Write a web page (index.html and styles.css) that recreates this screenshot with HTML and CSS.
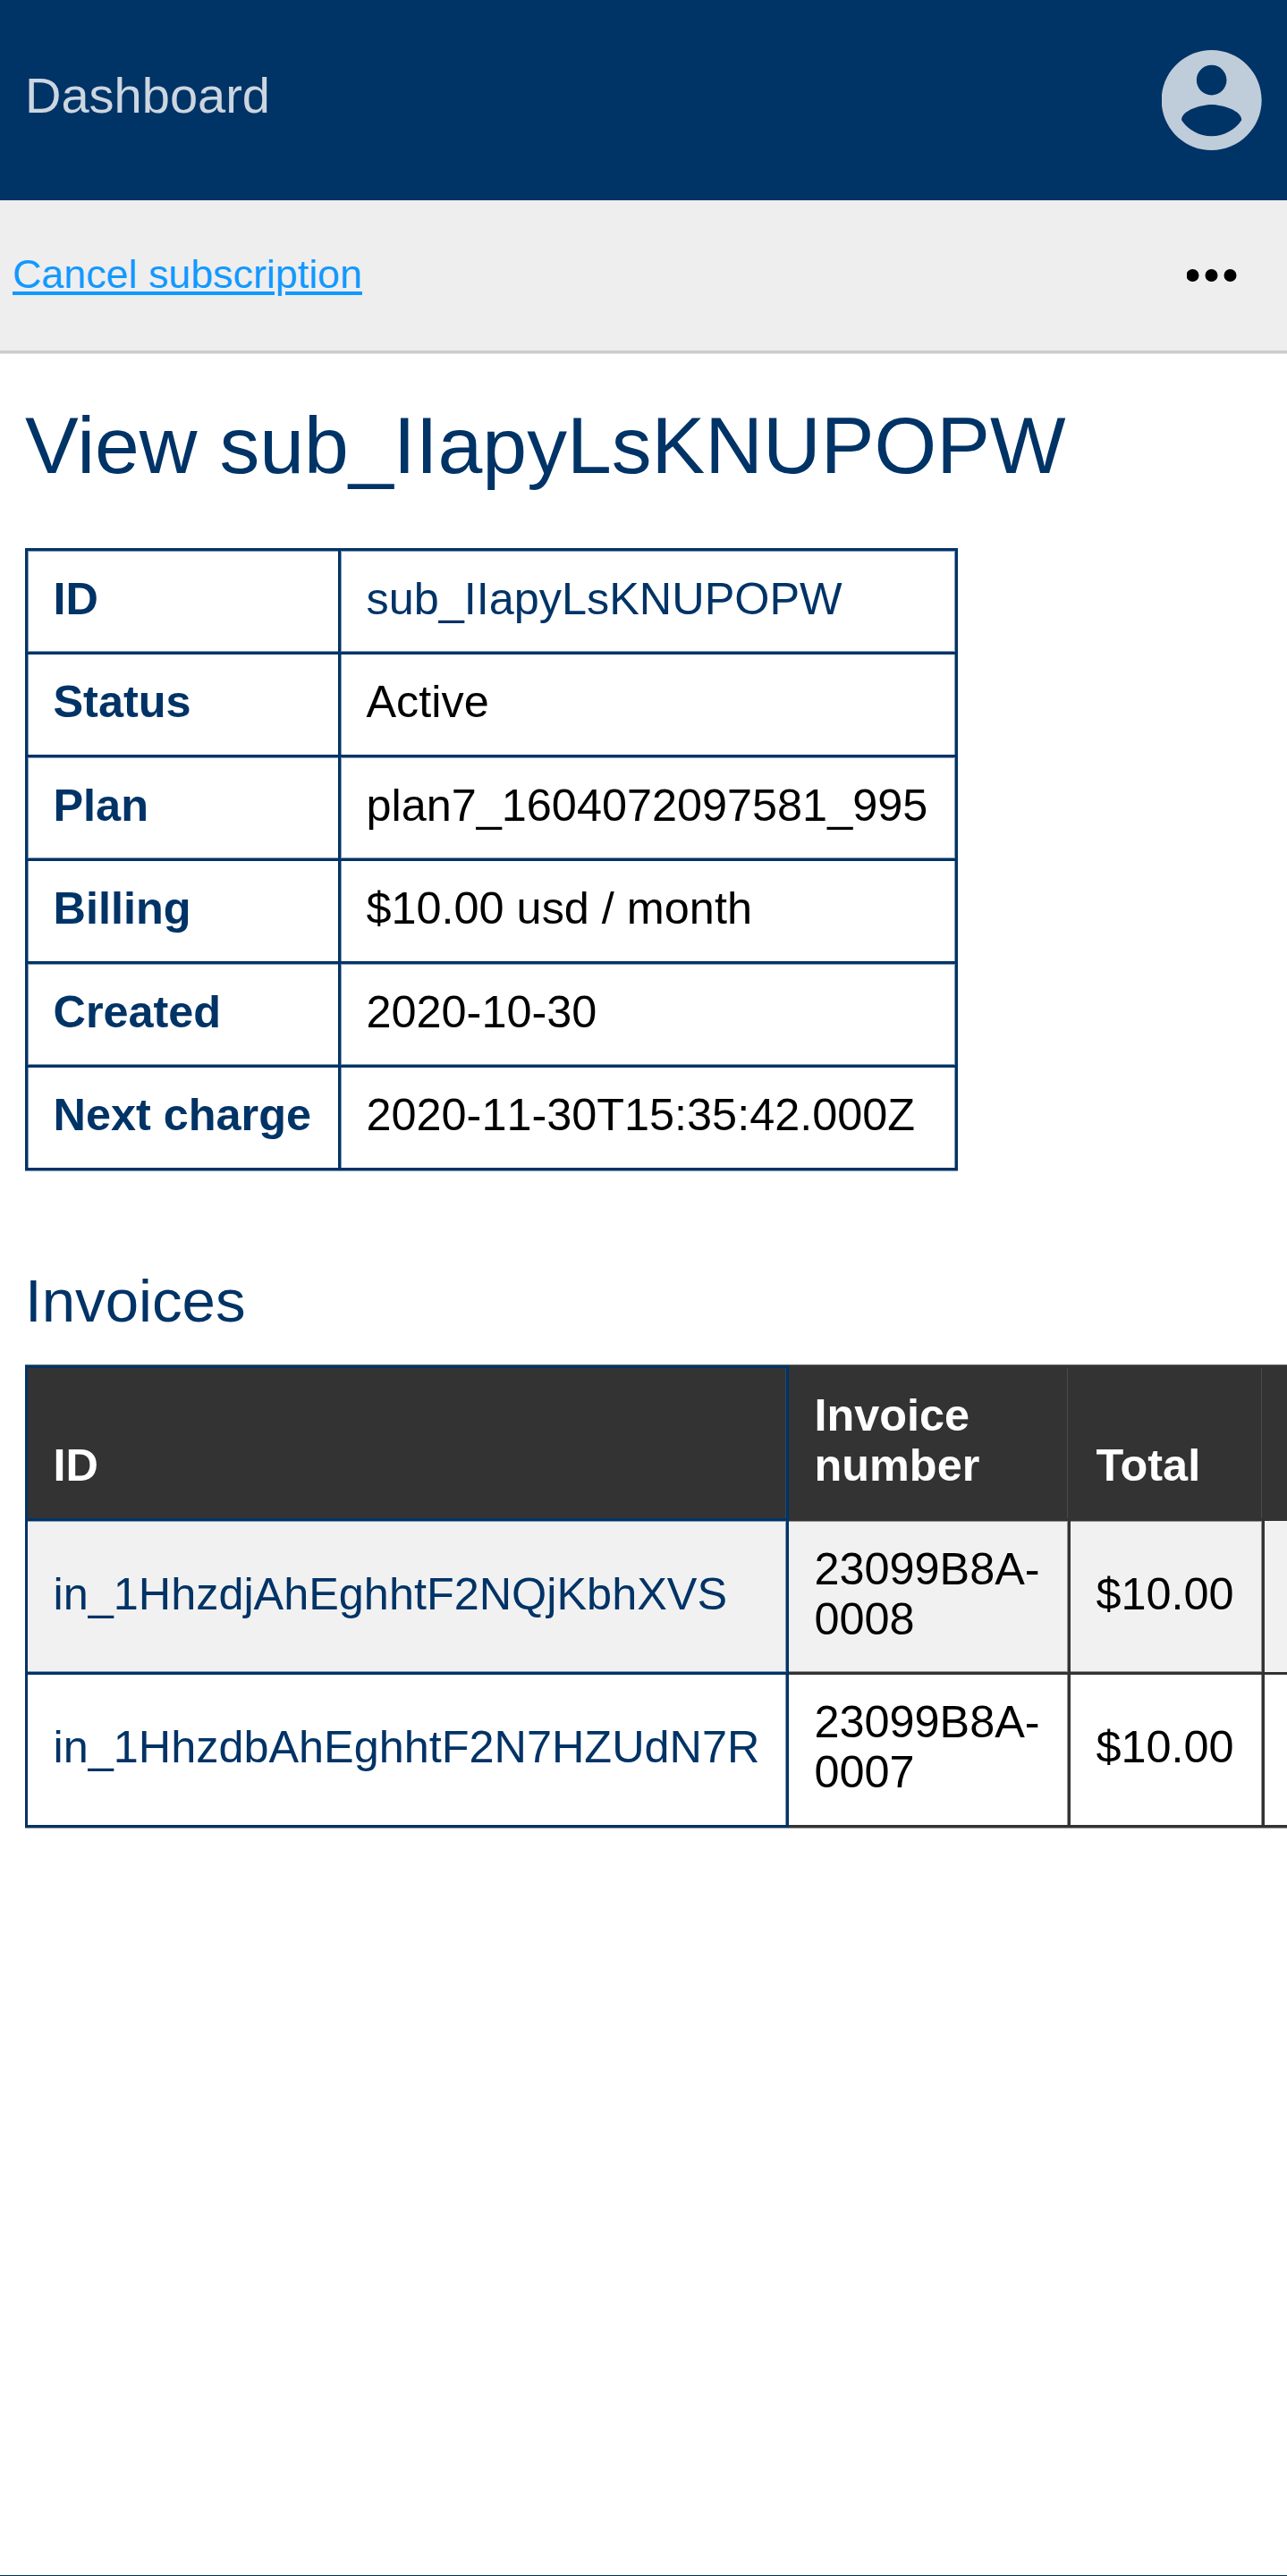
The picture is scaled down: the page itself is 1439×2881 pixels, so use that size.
FILE: index.html
```html
<!DOCTYPE html>
<html lang="en">
<head>
<meta charset="utf-8">
<title>View subscription</title>
<link rel="stylesheet" href="styles.css">
</head>
<body>
<header class="header">
  <a class="brand">Dashboard</a>
  <svg class="account" viewBox="2.06 2 20 20"><path d="M12 2C6.48 2 2 6.48 2 12s4.48 10 10 10 10-4.48 10-10S17.52 2 12 2zm0 3c1.66 0 3 1.34 3 3s-1.34 3-3 3-3-1.34-3-3 1.34-3 3-3zm0 14.2c-2.5 0-4.71-1.28-6-3.22.03-1.99 4-3.08 6-3.08 1.99 0 5.97 1.09 6 3.08-1.29 1.94-3.5 3.22-6 3.22z"/></svg>
</header>
<nav class="navbar">
  <a class="action">Cancel subscription</a>
  <svg class="more" viewBox="4.14 10 16 4"><circle cx="6" cy="12" r="2"/><circle cx="12" cy="12" r="2"/><circle cx="18" cy="12" r="2"/></svg>
</nav>
<main class="content">
  <h1>View sub_IIapyLsKNUPOPW</h1>
  <table class="details">
    <tr><th>ID</th><td><a>sub_IIapyLsKNUPOPW</a></td></tr>
    <tr><th>Status</th><td>Active</td></tr>
    <tr><th>Plan</th><td>plan7_1604072097581_995</td></tr>
    <tr><th>Billing</th><td>$10.00 usd / month</td></tr>
    <tr><th>Created</th><td>2020-10-30</td></tr>
    <tr><th>Next charge</th><td>2020-11-30T15:35:42.000Z</td></tr>
  </table>
  <h2>Invoices</h2>
  <table class="invoices">
    <colgroup><col class="col-id"><col class="col-number"><col class="col-total"><col class="col-rest"></colgroup>
    <thead>
      <tr><th>ID</th><th>Invoice number</th><th>Total</th><th></th></tr>
    </thead>
    <tbody>
      <tr><td><a>in_1HhzdjAhEghhtF2NQjKbhXVS</a></td><td>23099B8A-0008</td><td>$10.00</td><td></td></tr>
      <tr><td><a>in_1HhzdbAhEghhtF2N7HZUdN7R</a></td><td>23099B8A-0007</td><td>$10.00</td><td></td></tr>
    </tbody>
  </table>
</main>
<footer class="footer"></footer>
</body>
</html>
```
FILE: styles.css
```css
:root {
  --navy: #003366;
  --navy-soft: #8099b3;
  --dark: #333333;
  --dark-soft: #929292;
}
* { box-sizing: border-box; }
body {
  margin: 0;
  min-height: 2881px;
  display: flex;
  flex-direction: column;
  overflow: hidden;
  background: #fff;
  color: #000;
  font-family: "Liberation Sans", Arial, sans-serif;
  font-size: 50.4px;
  line-height: 56px;
}
.header {
  height: 224px;
  padding: 0 28px;
  display: flex;
  justify-content: space-between;
  align-items: center;
  background: var(--navy);
}
.brand {
  font-size: 56px;
  line-height: 64px;
  padding-bottom: 10px;
  color: #ccd6e0;
}
.account { width: 112px; height: 112px; fill: #bfccd9; }
.navbar {
  height: 171px;
  padding: 0 56px 0 14px;
  display: flex;
  justify-content: space-between;
  align-items: center;
  background: #eee;
  border-bottom: 3px solid #ccc;
  box-shadow: 0 1px #e5e5e5;
}
.action {
  padding-bottom: 4px;
  font-size: 44.8px;
  color: #1199ff;
  text-decoration: underline;
  text-decoration-thickness: 3.5px;
  text-underline-offset: 3.5px;
}
.more { width: 56px; height: 14px; }
.content { flex: 1; padding-left: 28px; }
h1, h2 { margin: 0; font-weight: 400; color: var(--navy); }
h1 { font-size: 89.6px; line-height: 102px; padding-top: 52px; height: 218px; }
h2 { font-size: 67.2px; line-height: 76px; padding-top: 108px; height: 218px; }
table { border-spacing: 0; table-layout: fixed; }
th, td { text-align: left; padding: 25px 0 0 28.5px; }
th { color: var(--navy); }
a { color: var(--navy); }

.details {
  width: 1043px;
  border: solid var(--navy);
  border-width: 3px 0 0 3px;
  box-shadow: 0 1px var(--navy-soft);
}
.details th, .details td {
  height: 115px;
  vertical-align: top;
  border: solid var(--navy);
  border-width: 0 3px 3px 0;
  box-shadow: inset 1px 0 var(--navy-soft);
}
.details th { width: 350px; }
.details td {
  font-kerning: none;
  box-shadow: inset 1px 0 var(--navy-soft), inset -1px 0 var(--navy-soft);
}
.details tr:nth-child(odd) > * { height: 116px; padding-top: 26px; }
.details tr:nth-child(odd) th {
  box-shadow: inset 1px 0 var(--navy-soft), inset 0 1px var(--navy-soft), inset 0 -1px var(--navy-soft);
}
.details tr:nth-child(odd) td {
  box-shadow: inset 1px 0 var(--navy-soft), inset -1px 0 var(--navy-soft), inset 0 1px var(--navy-soft), inset 0 -1px var(--navy-soft);
}

.invoices {
  --edge: var(--dark-soft);
  width: 1411px;
  border-left: 3px solid var(--navy);
  box-shadow: 0 1px var(--dark-soft), 0 -1px #667070;
}
.col-id { width: 851px; }
.col-number { width: 315px; }
.col-total { width: 217px; }
.invoices th, .invoices td {
  border: solid var(--dark);
  border-width: 0 3px 3px 0;
  box-shadow: inset -1px 0 var(--edge);
}
.invoices th {
  --edge: #4b4b4b;
  height: 174px;
  vertical-align: bottom;
  padding: 0 0 31px 28.5px;
  border-top-width: 3px;
  background: var(--dark);
  color: #fff;
}
.invoices td { height: 171px; vertical-align: middle; padding: 0 0 6px 28.5px; }
.invoices tbody tr:first-child { background: #f1f1f1; }
.invoices tbody tr:first-child td {
  height: 172px;
  box-shadow: inset -1px 0 var(--edge), inset 0 1px var(--edge), inset 0 -1px var(--edge);
}
.invoices tr > :first-child { border-color: var(--navy); }
.invoices td:first-child { --edge: var(--navy-soft); }
.invoices th:first-child { --edge: #33475a; }
.invoices tr > :last-child { --edge: transparent; border-right: 0; }
.footer { height: 1px; background: var(--navy); }
```
